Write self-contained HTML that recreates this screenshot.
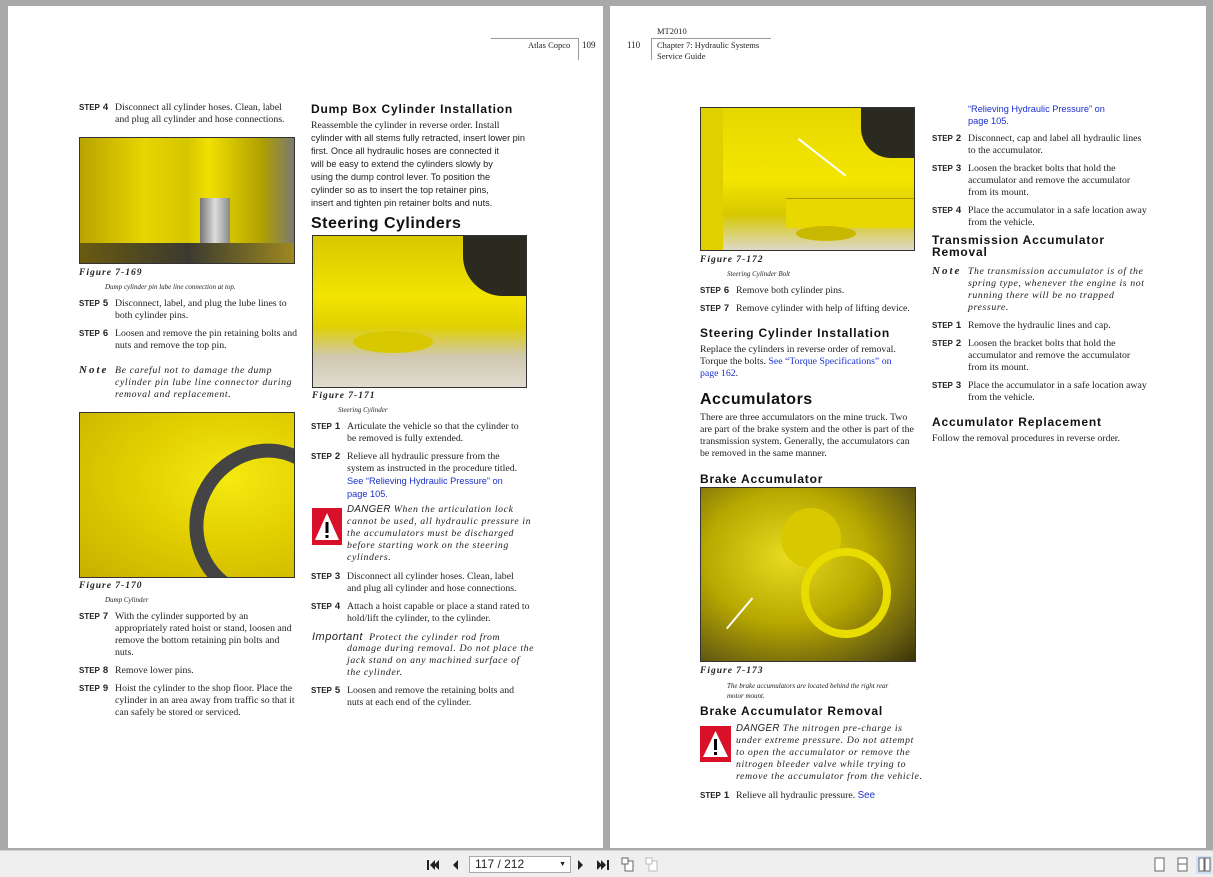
<!DOCTYPE html>
<html><head><meta charset="utf-8"><style>
*{margin:0;padding:0;box-sizing:border-box}
body{width:1213px;height:877px;background:#a9a9a9;position:relative;overflow:hidden;font-family:"Liberation Serif",serif;font-size:9.8px;color:#222}
.pg{position:absolute;background:#fff;top:6px;height:842px}
.a{position:absolute;line-height:12px;white-space:nowrap}
.st{position:absolute;font-family:"Liberation Sans",sans-serif;font-weight:bold;font-size:8px;line-height:12px;white-space:nowrap}
.st b{font-size:9.5px;margin-left:3px}
.h{position:absolute;font-family:"Liberation Sans",sans-serif;font-weight:bold;font-size:12px;letter-spacing:.8px;color:#111;white-space:nowrap}
.h2{position:absolute;font-family:"Liberation Sans",sans-serif;font-weight:bold;font-size:16px;letter-spacing:.5px;color:#111;white-space:nowrap}
.fig{position:absolute;font-style:italic;font-weight:bold;font-size:9.5px;letter-spacing:1px}
.cap{position:absolute;font-style:italic;font-size:7px}
.it{position:absolute;font-style:italic;letter-spacing:.6px;line-height:12px;white-space:nowrap}
.sans{font-family:"Liberation Sans",sans-serif}
.blue{color:#1a2fd0}
.img{position:absolute;border:1px solid #333;overflow:hidden}
.dg{position:absolute;background:#d8102a}
.note{font-weight:bold;font-style:italic;font-size:11px;letter-spacing:2px}
</style></head><body>
<div class="pg" style="left:8px;width:595px"></div>
<div class="pg" style="left:610px;width:596px"></div>

<div style="position:absolute;left:491px;top:38px;width:87px;border-top:1px solid #999"></div>
<div style="position:absolute;left:578px;top:38px;height:22px;border-left:1px solid #999"></div>
<div class="a" style="left:528px;top:39px;font-size:8.5px">Atlas Copco</div>
<div class="a" style="left:582px;top:39px;font-size:9px">109</div>
<div class="a" style="left:657px;top:25px;font-size:8.5px">MT2010</div>
<div class="a" style="left:627px;top:39px;font-size:9px">110</div>
<div style="position:absolute;left:651px;top:38px;width:120px;border-top:1px solid #999"></div>
<div style="position:absolute;left:651px;top:38px;height:22px;border-left:1px solid #999"></div>
<div class="a" style="left:657px;top:39px;font-size:8.5px">Chapter 7: Hydraulic Systems</div>
<div class="a" style="left:657px;top:50px;font-size:8.5px">Service Guide</div>

<div class="st" style="left:79px;top:102px">STEP<b>4</b></div>
<div class="a" style="left:115px;top:102px">Disconnect all cylinder hoses. Clean, label<br>and plug all cylinder and hose connections.</div>
<div class="img" style="left:79px;top:137px;width:216px;height:127px;background:linear-gradient(90deg,#b8a400 0%,#e8d400 30%,#d6c600 50%,#f0e000 60%,#b0a000 85%,#7a7a70 100%)">
 <div style="position:absolute;left:120px;top:60px;width:30px;height:66px;background:linear-gradient(90deg,#777,#ddd,#888)"></div>
 <div style="position:absolute;left:0;top:105px;width:216px;height:22px;background:linear-gradient(90deg,#6a5a10,#3a3a30,#a08a20)"></div>
</div>
<div class="fig" style="left:79px;top:268px">Figure 7-169</div>
<div class="cap" style="left:105px;top:283px">Dump cylinder pin lube line connection at top.</div>
<div class="st" style="left:79px;top:298px">STEP<b>5</b></div>
<div class="a" style="left:115px;top:298px">Disconnect, label, and plug the lube lines to<br>both cylinder pins.</div>
<div class="st" style="left:79px;top:328px">STEP<b>6</b></div>
<div class="a" style="left:115px;top:328px">Loosen and remove the pin retaining bolts and<br>nuts and remove the top pin.</div>
<div class="a note" style="left:79px;top:364px">Note</div>
<div class="it" style="left:115px;top:365px">Be careful not to damage the dump<br>cylinder pin lube line connector during<br>removal and replacement.</div>
<div class="img" style="left:79px;top:412px;width:216px;height:166px;background:radial-gradient(ellipse at 70% 40%,#f5ea10 0%,#e0cc00 50%,#c8b000 100%)">
 <div style="position:absolute;left:110px;top:30px;width:150px;height:160px;border-radius:50%;border:14px solid #444;transform:rotate(20deg)"></div>
</div>
<div class="fig" style="left:79px;top:581px">Figure 7-170</div>
<div class="cap" style="left:105px;top:596px">Dump Cylinder</div>
<div class="st" style="left:79px;top:611px">STEP<b>7</b></div>
<div class="a" style="left:115px;top:611px">With the cylinder supported by an<br>appropriately rated hoist or stand, loosen and<br>remove the bottom retaining pin bolts and<br>nuts.</div>
<div class="st" style="left:79px;top:665px">STEP<b>8</b></div>
<div class="a" style="left:115px;top:665px">Remove lower pins.</div>
<div class="st" style="left:79px;top:683px">STEP<b>9</b></div>
<div class="a" style="left:115px;top:683px">Hoist the cylinder to the shop floor. Place the<br>cylinder in an area away from traffic so that it<br>can safely be stored or serviced.</div>

<div class="h" style="left:311px;top:102px">Dump Box Cylinder Installation</div>
<div class="a" style="left:311px;top:120px">Reassemble the cylinder in reverse order. Install<br><span class="sans" style="font-size:9.2px">cylinder with all stems fully retracted, insert lower pin<br>first. Once all hydraulic hoses are connected it<br>will be easy to extend the cylinders slowly by<br>using the dump control lever. To position the<br>cylinder so as to insert the top retainer pins,<br>insert and tighten pin retainer bolts and nuts.</span></div>
<div class="h2" style="left:311px;top:215px">Steering Cylinders</div>
<div class="img" style="left:312px;top:235px;width:215px;height:153px;background:linear-gradient(180deg,#d8c800 0%,#f2e400 40%,#e0d000 60%,#cfc7b0 80%,#e0dcd0 100%)">
 <div style="position:absolute;left:150px;top:0;width:65px;height:60px;background:#2a2a20;border-radius:0 0 0 40px"></div>
 <div style="position:absolute;left:40px;top:95px;width:80px;height:22px;background:#d8c800;border-radius:50%"></div>
</div>
<div class="fig" style="left:312px;top:391px">Figure 7-171</div>
<div class="cap" style="left:338px;top:406px">Steering Cylinder</div>
<div class="st" style="left:311px;top:421px">STEP<b>1</b></div>
<div class="a" style="left:347px;top:421px">Articulate the vehicle so that the cylinder to<br>be removed is fully extended.</div>
<div class="st" style="left:311px;top:451px">STEP<b>2</b></div>
<div class="a" style="left:347px;top:451px">Relieve all hydraulic pressure from the<br>system as instructed in the procedure titled.<br><span class="sans blue" style="font-size:9.2px">See “Relieving Hydraulic Pressure” on<br>page 105.</span></div>
<div class="dg" style="left:312px;top:508px;width:30px;height:37px"><svg width="30" height="37"><polygon points="15,5 27,32 3,32" fill="#fff"/><rect x="13.5" y="14" width="3" height="11" fill="#000"/><rect x="13.5" y="27" width="3" height="3" fill="#000"/></svg></div>
<div class="it" style="left:347px;top:504px"><span class="sans" style="letter-spacing:.3px">DANGER</span> When the articulation lock<br>cannot be used, all hydraulic pressure in<br>the accumulators must be discharged<br>before starting work on the steering<br>cylinders.</div>
<div class="st" style="left:311px;top:571px">STEP<b>3</b></div>
<div class="a" style="left:347px;top:571px">Disconnect all cylinder hoses. Clean, label<br>and plug all cylinder and hose connections.</div>
<div class="st" style="left:311px;top:601px">STEP<b>4</b></div>
<div class="a" style="left:347px;top:601px">Attach a hoist capable or place a stand rated to<br>hold/lift the cylinder, to the cylinder.</div>
<div class="it" style="left:312px;top:631px"><span class="sans" style="font-size:11px;letter-spacing:.5px">Important</span>&nbsp; Protect the cylinder rod from</div>
<div class="it" style="left:347px;top:643px">damage during removal. Do not place the<br>jack stand on any machined surface of<br>the cylinder.</div>
<div class="st" style="left:311px;top:685px">STEP<b>5</b></div>
<div class="a" style="left:347px;top:685px">Loosen and remove the retaining bolts and<br>nuts at each end of the cylinder.</div>

<div class="img" style="left:700px;top:107px;width:215px;height:144px;background:linear-gradient(180deg,#e6d800 0%,#f4e600 50%,#d6c800 75%,#ddd8c8 100%)">
 <div style="position:absolute;left:0;top:0;width:22px;height:144px;background:#e0d000"></div>
 <div style="position:absolute;left:160px;top:0;width:55px;height:50px;background:#2a2a20;border-radius:0 0 0 30px"></div>
 <div style="position:absolute;left:85px;top:90px;width:130px;height:30px;background:#e8d800;border-top:1px solid #aa9a00"></div>
 <div style="position:absolute;left:95px;top:118px;width:60px;height:15px;background:#c8b800;border-radius:50%"></div>
 <div style="position:absolute;left:98px;top:30px;width:60px;height:2px;background:#fff;transform:rotate(38deg);transform-origin:0 0"></div>
</div>
<div class="fig" style="left:700px;top:255px">Figure 7-172</div>
<div class="cap" style="left:727px;top:270px">Steering Cylinder Bolt</div>
<div class="st" style="left:700px;top:285px">STEP<b>6</b></div>
<div class="a" style="left:736px;top:285px">Remove both cylinder pins.</div>
<div class="st" style="left:700px;top:303px">STEP<b>7</b></div>
<div class="a" style="left:736px;top:303px">Remove cylinder with help of lifting device.</div>
<div class="h" style="left:700px;top:326px">Steering Cylinder Installation</div>
<div class="a" style="left:700px;top:344px">Replace the cylinders in reverse order of removal.<br>Torque the bolts. <span class="blue">See “Torque Specifications” on<br>page 162</span>.</div>
<div class="h2" style="left:700px;top:391px">Accumulators</div>
<div class="a" style="left:700px;top:412px">There are three accumulators on the mine truck. Two<br>are part of the brake system and the other is part of the<br>transmission system. Generally, the accumulators can<br>be removed in the same manner.</div>
<div class="h" style="left:700px;top:472px">Brake Accumulator</div>
<div class="img" style="left:700px;top:487px;width:216px;height:175px;background:radial-gradient(ellipse at 40% 40%,#e8dc20 0%,#b8a800 45%,#6a6010 80%,#3a3408 100%)">
 <div style="position:absolute;left:80px;top:20px;width:60px;height:60px;border-radius:50%;background:#d8c800"></div>
 <div style="position:absolute;left:100px;top:60px;width:90px;height:90px;border-radius:50%;border:8px solid #e8dc00"></div>
 <div style="position:absolute;left:25px;top:140px;width:40px;height:2px;background:#fff;transform:rotate(-50deg);transform-origin:0 0"></div>
</div>
<div class="fig" style="left:700px;top:666px">Figure 7-173</div>
<div class="cap" style="left:727px;top:681px;line-height:10px">The brake accumulators are located behind the right rear<br>motor mount.</div>
<div class="h" style="left:700px;top:704px">Brake Accumulator Removal</div>
<div class="dg" style="left:700px;top:726px;width:31px;height:36px"><svg width="31" height="36"><polygon points="15.5,5 28,31 3,31" fill="#fff"/><rect x="14" y="13" width="3" height="11" fill="#000"/><rect x="14" y="26" width="3" height="3" fill="#000"/></svg></div>
<div class="it" style="left:736px;top:723px"><span class="sans" style="letter-spacing:.3px">DANGER</span> The nitrogen pre-charge is<br>under extreme pressure. Do not attempt<br>to open the accumulator or remove the<br>nitrogen bleeder valve while trying to<br>remove the accumulator from the vehicle.</div>
<div class="st" style="left:700px;top:790px">STEP<b>1</b></div>
<div class="a" style="left:736px;top:790px">Relieve all hydraulic pressure. <span class="sans blue">See</span></div>

<div class="a sans blue" style="left:968px;top:103px;font-size:9.2px">“Relieving Hydraulic Pressure” on<br>page 105.</div>
<div class="st" style="left:932px;top:133px">STEP<b>2</b></div>
<div class="a" style="left:968px;top:133px">Disconnect, cap and label all hydraulic lines<br>to the accumulator.</div>
<div class="st" style="left:932px;top:163px">STEP<b>3</b></div>
<div class="a" style="left:968px;top:163px">Loosen the bracket bolts that hold the<br>accumulator and remove the accumulator<br>from its mount.</div>
<div class="st" style="left:932px;top:205px">STEP<b>4</b></div>
<div class="a" style="left:968px;top:205px">Place the accumulator in a safe location away<br>from the vehicle.</div>
<div class="h" style="left:932px;top:234px;line-height:12px">Transmission Accumulator<br>Removal</div>
<div class="a note" style="left:932px;top:265px">Note</div>
<div class="it" style="left:968px;top:266px">The transmission accumulator is of the<br>spring type, whenever the engine is not<br>running there will be no trapped<br>pressure.</div>
<div class="st" style="left:932px;top:320px">STEP<b>1</b></div>
<div class="a" style="left:968px;top:320px">Remove the hydraulic lines and cap.</div>
<div class="st" style="left:932px;top:338px">STEP<b>2</b></div>
<div class="a" style="left:968px;top:338px">Loosen the bracket bolts that hold the<br>accumulator and remove the accumulator<br>from its mount.</div>
<div class="st" style="left:932px;top:380px">STEP<b>3</b></div>
<div class="a" style="left:968px;top:380px">Place the accumulator in a safe location away<br>from the vehicle.</div>
<div class="h" style="left:932px;top:415px">Accumulator Replacement</div>
<div class="a" style="left:932px;top:433px">Follow the removal procedures in reverse order.</div>

<div style="position:absolute;left:0;top:850px;width:1213px;height:27px;background:#efefef;border-top:1px solid #d0d0d0"></div>
<svg style="position:absolute;left:425px;top:857px" width="240" height="16">
 <rect x="2" y="3" width="2" height="10" fill="#222"/><polygon points="10,3 5,8 10,13" fill="#222"/><polygon points="14,3 9,8 14,13" fill="#222"/>
 <polygon points="33,3 28,8 33,13" fill="#222"/>
 <polygon points="153,3 158,8 153,13" fill="#222"/>
 <polygon points="172,3 177,8 172,13" fill="#222"/><polygon points="176,3 181,8 176,13" fill="#222"/><rect x="182" y="3" width="2" height="10" fill="#222"/>
 <rect x="200" y="4" width="8" height="10" fill="#fff" stroke="#666"/><rect x="197" y="1" width="6" height="6" fill="#fff" stroke="#666"/>
 <rect x="224" y="4" width="8" height="10" fill="#fff" stroke="#bbb"/><rect x="221" y="1" width="6" height="6" fill="#fff" stroke="#bbb"/>
</svg>
<div style="position:absolute;left:469px;top:856px;width:102px;height:17px;background:#fff;border:1px solid #aaa;font-family:'Liberation Sans',sans-serif;font-size:12px;line-height:15px;padding-left:5px">117 / 212<span style="position:absolute;right:4px;font-size:7px">▼</span></div>
<svg style="position:absolute;left:1152px;top:856px" width="60" height="18">
 <rect x="3" y="2" width="9" height="13" fill="#fff" stroke="#666"/>
 <rect x="26" y="2" width="9" height="13" fill="#fff" stroke="#666"/><line x1="26" y1="8" x2="35" y2="8" stroke="#666"/>
 <rect x="44" y="0" width="16" height="18" fill="#cfe0f4"/><rect x="47" y="2" width="5" height="13" fill="#fff" stroke="#666"/><rect x="53" y="2" width="5" height="13" fill="#fff" stroke="#666"/>
</svg>
</body></html>
